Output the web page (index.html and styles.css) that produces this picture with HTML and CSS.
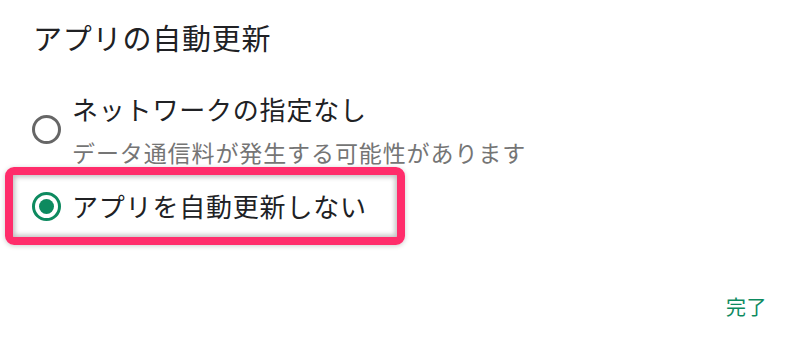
FILE: index.html
```html
<!DOCTYPE html>
<html lang="ja">
<head>
    <meta charset="UTF-8">
    <title>アプリの自動更新</title>
    <link rel="stylesheet" href="styles.css">
</head>
<body>

<div class="dialog">
    <h2 class="dialog-title">アプリの自動更新</h2>

    <div class="option">
        <span class="radio"></span>
        <div class="option-text">
            <div class="option-label">ネットワークの指定なし</div>
            <div class="option-sub">データ通信料が発生する可能性があります</div>
        </div>
    </div>

    <div class="highlight">
        <div class="option">
            <span class="radio checked"></span>
            <div class="option-text">
                <div class="option-label">アプリを自動更新しない</div>
            </div>
        </div>
    </div>

    <div class="actions">
        <button class="done-btn">完了</button>
    </div>
</div>

</body>
</html>
```

FILE: styles.css
```css
body {
    margin: 0;
    background-color: #ffffff;
    font-family: "Noto Sans CJK JP", "Noto Sans", sans-serif;
    color: #202124;
}

.dialog {
    width: 805px;
    height: 344px;
    padding-top: 19px;
    box-sizing: border-box;
}

.dialog-title {
    margin: 0 0 36px 33px;
    font-size: 29px;
    font-weight: 400;
    line-height: 36px;
    letter-spacing: 0.8px;
}

.option {
    display: flex;
    align-items: center;
    padding-left: 32px;
}

.radio {
    width: 29px;
    height: 29px;
    box-sizing: border-box;
    border: 3px solid #666666;
    border-radius: 50%;
    flex-shrink: 0;
    margin-right: 11px;
    display: flex;
    align-items: center;
    justify-content: center;
}

.radio.checked {
    border-color: #0d8a5f;
}

.radio.checked::after {
    content: "";
    width: 15px;
    height: 15px;
    border-radius: 50%;
    background-color: #0d8a5f;
}

.option-label {
    font-size: 26px;
    line-height: 36px;
    letter-spacing: 0.8px;
}

.option-sub {
    margin-top: 10px;
    font-size: 23px;
    line-height: 30px;
    color: #757575;
    letter-spacing: 0.9px;
}

/* 强调框 */
.highlight {
    width: 400px;
    height: 78px;
    box-sizing: border-box;
    margin: 0 0 0 5px;
    border: 8px solid #ff2d6b;
    border-radius: 9px;
    display: flex;
    align-items: center;
    box-shadow: inset 0 0 5px 2px rgba(0, 0, 0, 0.25), 0 1px 5px rgba(0, 0, 0, 0.2);
}

.highlight .option {
    padding-left: 19px;
}

.actions {
    display: flex;
    justify-content: flex-end;
    padding: 50px 38px 0 0;
}

.done-btn {
    border: none;
    background: none;
    padding: 0;
    font-family: inherit;
    font-size: 20px;
    line-height: 24px;
    color: #0d8a5f;
    letter-spacing: 0.5px;
}
```
